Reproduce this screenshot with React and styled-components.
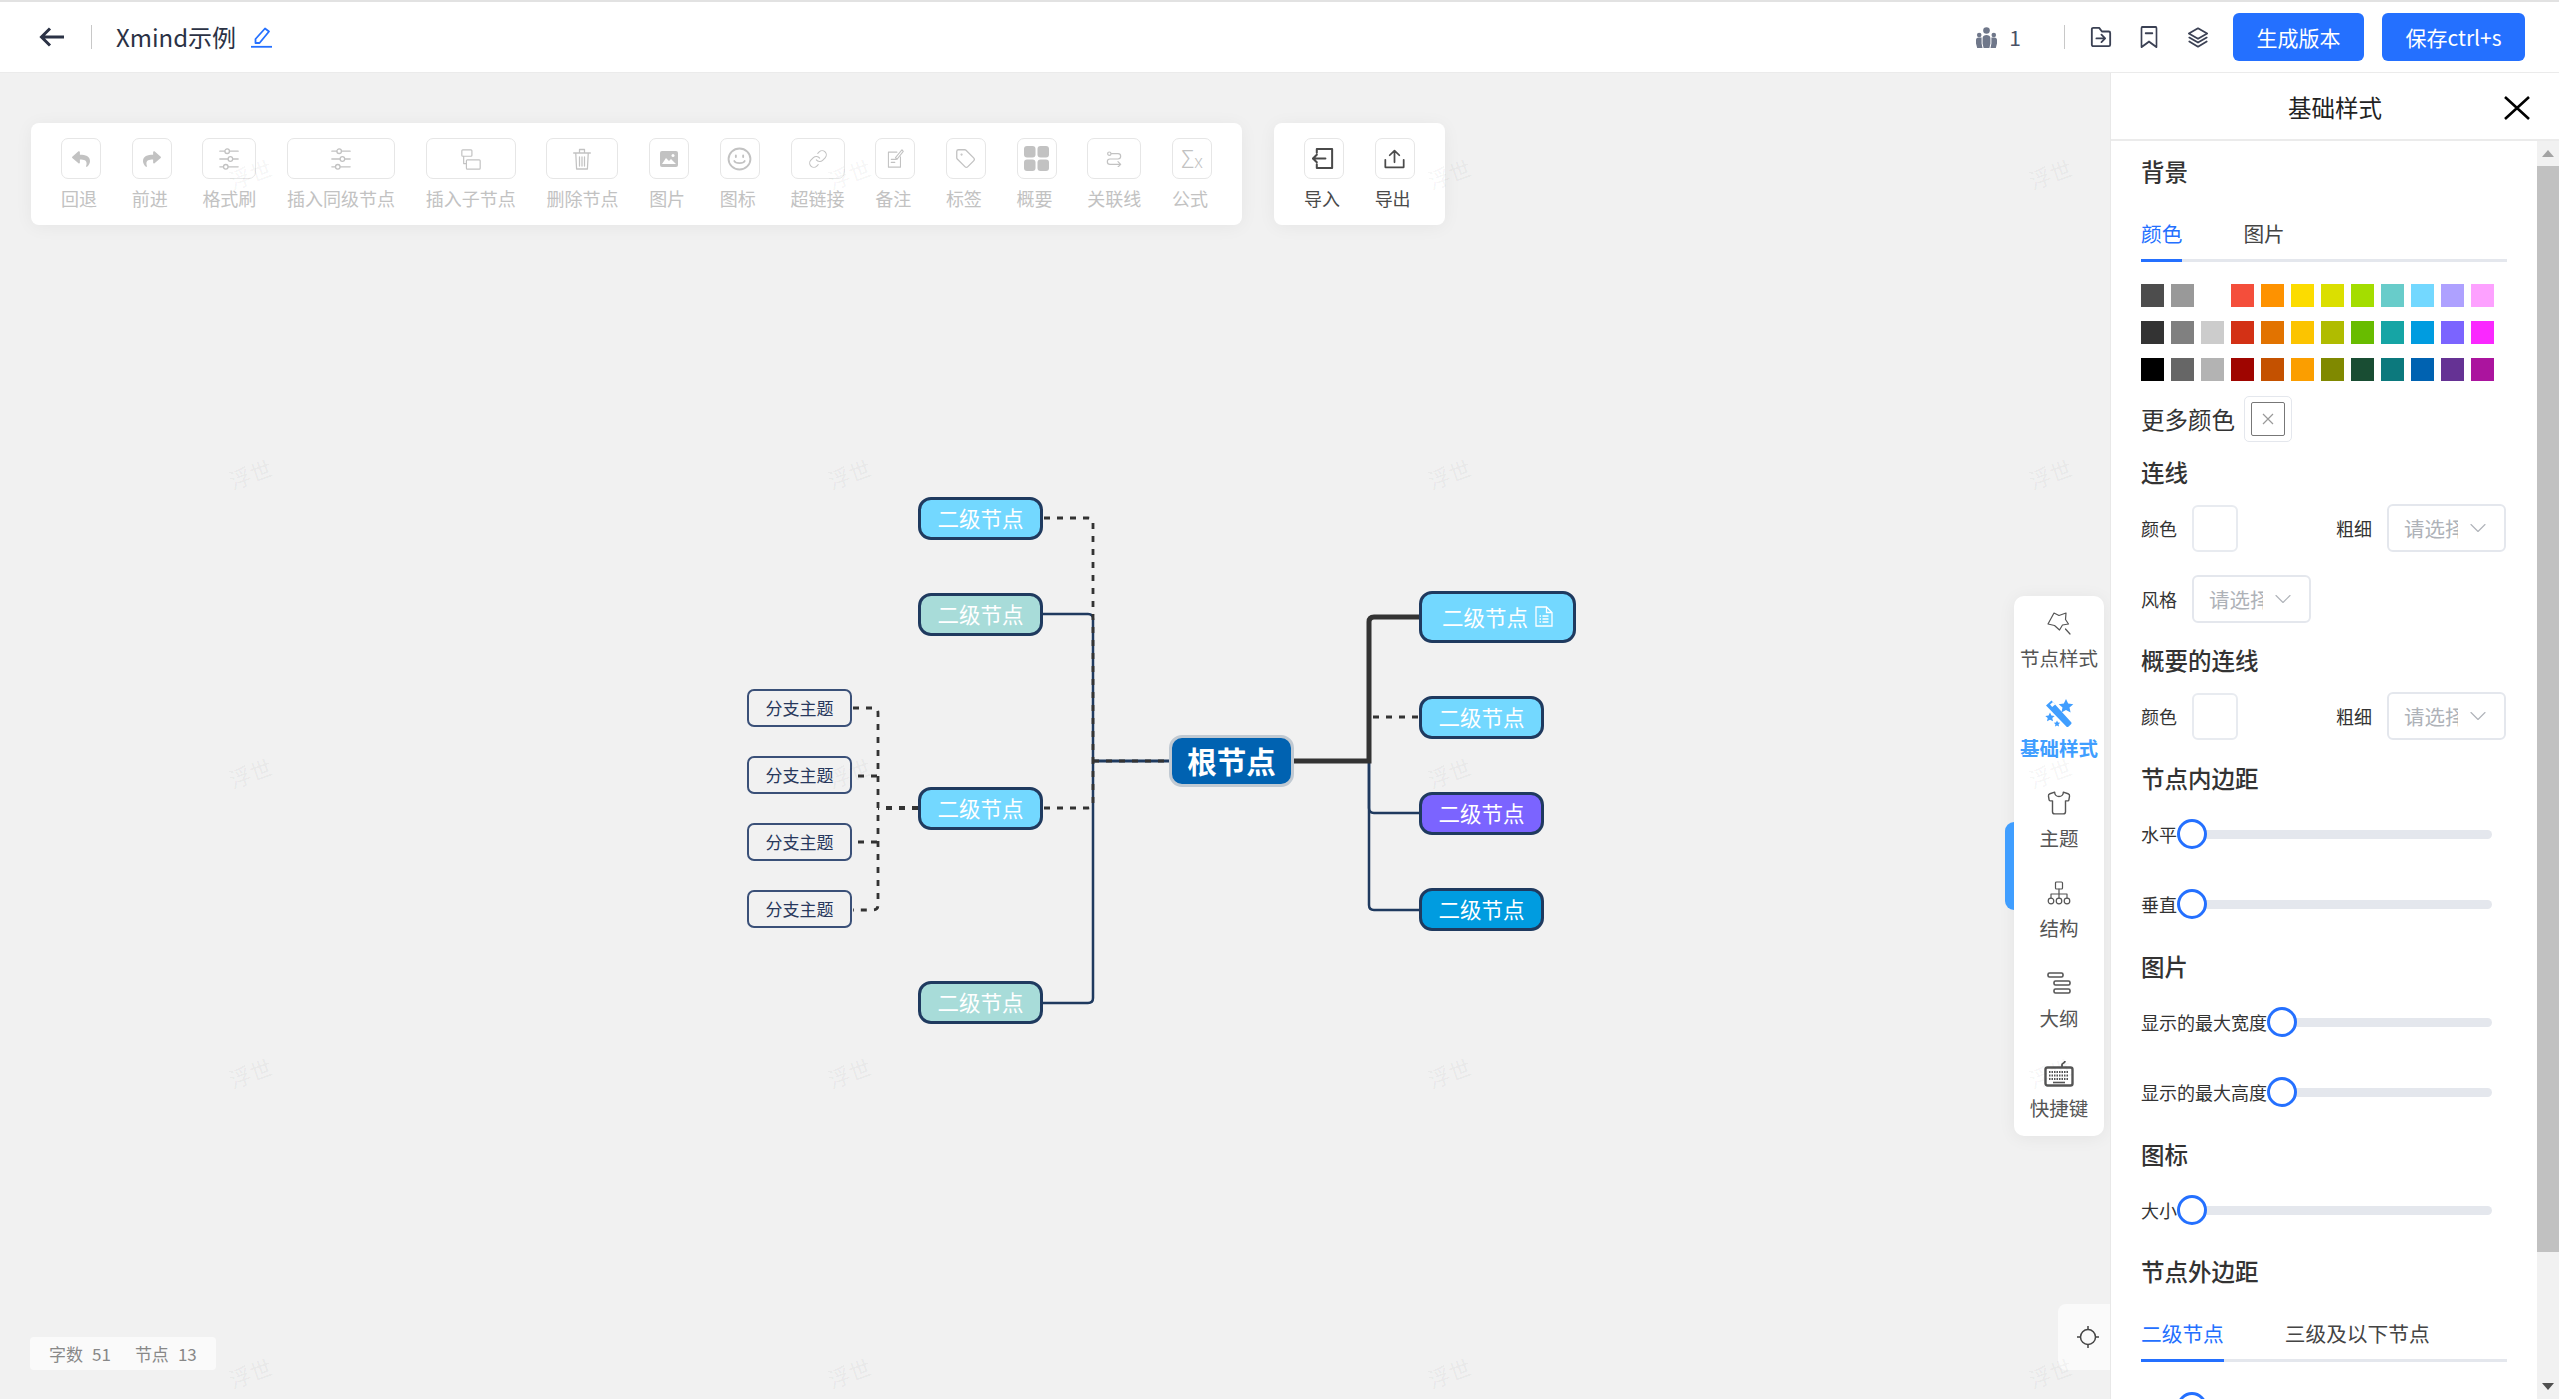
import React from "react";
import styled, { createGlobalStyle } from "styled-components";
import { FaReply, FaShare } from "react-icons/fa";
import { ChevronDown, Link, Shirt, Tag } from "lucide-react";

const BLUE = "#2470ff";
const NAVY = "#1f3a5f";
const DARK = "#333";

const Ico = ({ w = 24, h = 24, sw = 1.6, children }) => (
  <svg width={w} height={h} viewBox="0 0 24 24" fill="none" stroke="currentColor" strokeWidth={sw} strokeLinecap="round" strokeLinejoin="round" preserveAspectRatio="none">
    {children}
  </svg>
);

const SlidersIcon = () => (
  <Ico w={22} h={22} sw={1.4}>
    <path d="M2 3.500h5.500M12.500 3.500H22M2 12h9M16 12h6M2 20.500h4M11 20.500h11" />
    <circle cx="10" cy="3.500" r="2.500" />
    <circle cx="13.500" cy="12" r="2.500" />
    <circle cx="8.500" cy="20.500" r="2.500" />
  </Ico>
);
const ChildIcon = () => (
  <Ico w={22} h={22} sw={1.300}>
    <rect x="2" y="2" width="11" height="7" rx="1" />
    <rect x="7" y="13" width="15" height="10" rx="1" />
    <path d="M4 9v8h3" />
  </Ico>
);
const TrashIcon = () => (
  <Ico w={20} h={24} sw={1.500}>
    <path d="M2 6h20M9 6V2.500h6V6M4.500 6l1 16h13l1-16M9 10v9M12 10v9M15 10v9" />
  </Ico>
);
const ImageIcon = () => (
  <svg width="18" height="16" viewBox="0 0 18 16">
    <rect width="18" height="16" rx="2" fill="currentColor" />
    <path d="M2 13l4-6 3 3 2-2 5 5z" fill="#fff" />
    <circle cx="13" cy="4.500" r="1.500" fill="#fff" />
  </svg>
);
const SmileIcon = () => (
  <Ico w={25} h={24} sw={1.800}>
    <circle cx="12" cy="12" r="10.500" />
    <path d="M7 14c1.200 2.800 8.800 2.800 10 0M8.500 8.500v1.500M15.500 8.500v1.500" />
  </Ico>
);
const NoteIcon = () => (
  <Ico w={17} h={19} sw={1.500}>
    <path d="M14 4H2v19h17V10M6 13h7M6 17h5" />
    <path d="M12 11l9-10 2 2-9 10z" />
  </Ico>
);
const GridIcon = () => (
  <svg width="25" height="25" viewBox="0 0 25 25" fill="currentColor">
    <rect width="11.500" height="11.500" rx="3" />
    <rect x="13.500" width="11.500" height="11.500" rx="3" />
    <rect y="13.500" width="11.500" height="11.500" rx="3" />
    <rect x="13.500" y="13.500" width="11.500" height="11.500" rx="3" />
  </svg>
);
const RelationIcon = () => (
  <Ico w={16} h={16} sw={1.800}>
    <circle cx="5" cy="4" r="2.500" />
    <path d="M8 4h10a3.500 3.500 0 0 1 0 8H6a3.500 3.500 0 0 0 0 8h16M18 16l4 4-4 4" />
  </Ico>
);
const ImportIcon = () => (
  <Ico w={23} h={23} sw={2.100}>
    <path d="M5 6V2h16v20H5v-4M1 12h13M5 8l-4 4 4 4" />
  </Ico>
);
const ExportIcon = () => (
  <Ico w={21} h={20} sw={2}>
    <path d="M12 16V2M6.500 7.500L12 2l5.500 5.500M1.500 13v9h21v-9" />
  </Ico>
);
const StarOutlineIcon = () => (
  <Ico w={24} h={24} sw={1.200}>
    <path d="M7 2l5 2.500L19 2l-.5 6.500 3 4.500-6 1-3 5-5-4.500L1 13l3-5.500z" />
    <path d="M18.500 18l4.500 5" />
  </Ico>
);
const WandIcon = () => (
  <svg width="30" height="29" viewBox="0 0 30 29" fill="currentColor">
    <path d="M2 6.500L7.500 1.500 27 23c.7.800.7 1.600 0 2.300l-2.400 2.200c-.8.700-1.600.7-2.300-.1z" />
    <path d="M6 5.500l3-2.500 2.200 2.500-3 2.500z" fill="#fff" />
    <path d="M22 0l2.200 4.600 5.100.6-3.800 3.400 1.100 5L22 11.100l-4.600 2.500 1.100-5-3.800-3.400 5.100-.6z" />
    <path d="M6 13.500l1.400 3 3.300.4-2.400 2.200.7 3.200L6 20.700l-3 1.600.7-3.200-2.400-2.200 3.300-.4z" />
    <path d="M13 21.500l1 2 2.200.3-1.600 1.500.4 2.200-2-1.100-2 1.100.4-2.200-1.600-1.500 2.200-.3z" />
  </svg>
);
const StructureIcon = () => (
  <Ico w={24} h={24} sw={1.200}>
    <rect x="8.500" y="1" width="7" height="7" rx="1" />
    <path d="M12 8v5M4 17v-4h16v4M12 13v4" />
    <circle cx="4" cy="20" r="2.800" />
    <circle cx="12" cy="20" r="2.800" />
    <circle cx="20" cy="20" r="2.800" />
  </Ico>
);
const OutlineIcon = () => (
  <Ico w={24} h={24} sw={1.600}>
    <rect x="1" y="2" width="15" height="4" rx="1.500" />
    <rect x="7" y="10" width="16" height="4" rx="1.500" />
    <rect x="7" y="18" width="16" height="4" rx="1.500" />
  </Ico>
);
const KeyboardIcon = () => (
  <svg width="30" height="27" viewBox="0 0 30 27" fill="none" stroke="currentColor">
    <rect x="1.500" y="7.500" width="27" height="18" rx="2" strokeWidth="2.400" />
    <path d="M5 12h20M5 15.500h20M5 19h20" strokeWidth="2" strokeDasharray="1.500 1" />
    <path d="M9 22.500h12" strokeWidth="1.600" />
    <path d="M18 7V4.500c0-1.500 3-1 3-3.500" strokeWidth="1.800" />
  </svg>
);
const FolderIcon = () => (
  <Ico w={22} h={22} sw={2}>
    <path d="M2 20.500V3.500C2 2.700 2.700 2 3.500 2H10l3 4h7.500c.8 0 1.500.7 1.500 1.500v13c0 .8-.7 1.500-1.500 1.500h-17C2.700 22 2 21.300 2 20.500z" />
    <path d="M7 13.500h9M12.500 9.500l4 4-4 4" />
  </Ico>
);
const BookmarkIcon = () => (
  <Ico w={18} h={22} sw={2.200}>
    <path d="M2 23V2.500C2 1.700 2.700 1 3.500 1h17c.8 0 1.500.7 1.500 1.500V23l-10-6z" />
    <path d="M7.500 8h9" />
  </Ico>
);
const LayersIcon = () => (
  <Ico w={22} h={21} sw={1.900}>
    <path d="M12 1.500L22 7.500 12 13.500 2 7.500z" />
    <path d="M2.500 12L12 17.800 21.500 12" />
    <path d="M2.500 16.500L12 22.500 21.500 16.500" />
  </Ico>
);
const UsersIcon = () => (
  <svg width="21" height="21" viewBox="0 0 21 21" fill="#6f778a">
    <circle cx="10.500" cy="3.500" r="3.300" />
    <circle cx="3.200" cy="8" r="2.300" />
    <circle cx="17.800" cy="8" r="2.300" />
    <path d="M6.600 11c0-2 1.900-3 3.900-3s3.900 1 3.900 3v5.500l-1 4.500H7.600l-1-4.500z" />
    <path d="M0 13c0-1.500 1-2.500 2.500-2.500h3.100v6L6.500 21H1.200L0 16.500zM15.400 10.500h3.100c1.500 0 2.500 1 2.500 2.500v3.500L19.800 21h-5.300l.9-4.500z" />
  </svg>
);
const PencilIcon = () => (
  <svg width="21" height="21" viewBox="0 0 21 21" fill="none" stroke={BLUE} strokeWidth="1.800" strokeLinejoin="round">
    <path d="M14 1.500l4 3-9.500 11.500H4.500V12z" />
    <path d="M0 19.800h21" />
  </svg>
);
const CloseIcon = () => (
  <svg width="26" height="24" viewBox="0 0 26 24" stroke="#000" strokeWidth="2.600">
    <path d="M1 1l24 22M25 1L1 23" />
  </svg>
);
const BackIcon = () => (
  <svg width="25" height="20" viewBox="0 0 25 20" fill="none" stroke="#2b3245" strokeWidth="3">
    <path d="M25 10H3M11 1.500L2.500 10l8.500 8.500" />
  </svg>
);
const TargetIcon = () => (
  <svg width="22" height="22" viewBox="0 0 22 22" fill="none" stroke="#444" strokeWidth="1.500">
    <circle cx="11" cy="11" r="7.500" />
    <path d="M11 0v4M11 18v4M0 11h4M18 11h4" />
  </svg>
);
const NodeNoteIcon = () => (
  <svg width="18" height="21" viewBox="0 0 18 21" fill="none" stroke="#fff" strokeWidth="1.300">
    <path d="M1 1h10.500L17 6.500V20H1zM11.500 1v5.500H17" />
    <path d="M4.500 10h1.500M7.500 10h6M4.500 13h1.500M7.500 13h6M4.500 16h1.500M7.500 16h6" />
  </svg>
);

const GlobalStyle = createGlobalStyle`
  html, body {
    margin: 0;
    padding: 0;
    overflow: hidden;
  }
  body {
    font-family: "Noto Sans CJK SC", "Noto Sans", sans-serif;
    color: #333;
  }
  * {
    box-sizing: border-box;
  }
`;

const Page = styled.div`
  width: 2559px;
  height: 1399px;
  display: flex;
  flex-direction: column;
  overflow: hidden;
  background: #fff;
`;

const Header = styled.header`
  flex: none;
  height: 73px;
  display: flex;
  align-items: center;
  padding: 0 34px 0 39px;
  background: #fff;
  border-top: 2px solid #e2e2e2;
  border-bottom: 1px solid #ebebeb;
`;

const HeaderDivider = styled.span`
  width: 1px;
  height: 24px;
  background: #c8c8c8;
  margin-left: ${(p) => p.$gap}px;
`;

const BackButton = styled.span`
  display: flex;
`;

const Title = styled.span`
  margin-left: 24px;
  font-size: 24px;
  line-height: 36px;
  color: #2b3245;
`;

const EditButton = styled.span`
  display: flex;
  margin-left: 15px;
`;

const UserCount = styled.span`
  margin-left: auto;
  display: flex;
  align-items: center;
  gap: 12px;
  font-size: 21px;
  color: #4a5166;
`;

const HeaderIcon = styled.span`
  display: flex;
  color: #3b4154;
  margin-left: ${(p) => p.$gap}px;
`;

const PrimaryButton = styled.button`
  width: ${(p) => p.$w}px;
  height: 48px;
  margin-left: ${(p) => p.$gap}px;
  border: 0;
  border-radius: 6px;
  background: ${BLUE};
  color: #fff;
  font: 21px "Noto Sans CJK SC", sans-serif;
  padding: 0;
`;

const Body = styled.main`
  flex: 1;
  display: flex;
  min-height: 0;
`;

const Canvas = styled.section`
  flex: 1;
  position: relative;
  overflow: hidden;
  background: #f1f1f1;
`;

const MapLayer = styled.div`
  position: absolute;
  left: 0;
  top: -73px;
  width: 2110px;
  height: 1399px;
`;

const MapLines = styled.svg`
  position: absolute;
  left: 0;
  top: 0;
`;

const MapNode = styled.div`
  position: absolute;
  left: ${(p) => p.$x}px;
  top: ${(p) => p.$y}px;
  width: ${(p) => p.$w}px;
  height: ${(p) => p.$h}px;
  display: flex;
  align-items: center;
  justify-content: center;
  gap: 7px;
  padding-bottom: 2px;
  background: ${(p) => p.$bg};
  border: 3px solid ${NAVY};
  border-radius: 13px;
  color: #fff;
  font-size: 21.500px;
  white-space: nowrap;
`;

const RootNode = styled(MapNode)`
  border-color: #c0c9d2;
  font-size: 29.500px;
  font-weight: 700;
`;

const SubNode = styled(MapNode)`
  background: transparent;
  border-width: 2px;
  border-color: #3a5078;
  border-radius: 7px;
  color: #28385c;
  font-size: 17px;
`;

const FloatRow = styled.div`
  position: absolute;
  left: 31px;
  top: 50px;
  display: flex;
  gap: 32px;
`;

const Toolbar = styled.div`
  display: flex;
  gap: 30.700px;
  padding: 15px 30px;
  background: #fff;
  border-radius: 8px;
  box-shadow: 0 2px 18px rgba(0, 0, 0, 0.05);
`;

const ToolItem = styled.div`
  display: flex;
  flex-direction: column;
  color: ${(p) => (p.$on ? "#4a4a4a" : "#c2c2c2")};
`;

const ToolBox = styled.div`
  height: 41px;
  min-width: 40px;
  display: flex;
  align-items: center;
  justify-content: center;
  border: 1px solid #e6e6e6;
  border-radius: 7px;
  background: #fff;
`;

const ToolLabel = styled.span`
  margin-top: 7px;
  font-size: 18px;
  line-height: 24px;
  white-space: nowrap;
`;

const FormulaGlyph = styled.span`
  font: 300 25px/1 "Noto Sans", sans-serif;
  transform: scaleX(0.9);
  small {
    font-size: 19px;
  }
`;

const SideDock = styled.nav`
  position: absolute;
  right: 6px;
  top: 523px;
  width: 90px;
  display: flex;
  flex-direction: column;
  gap: 26px;
  padding: 13px 0;
  background: #fff;
  border-radius: 10px;
  box-shadow: 0 2px 18px rgba(0, 0, 0, 0.06);
`;

const DockTab = styled.span`
  position: absolute;
  left: -9px;
  top: 226px;
  width: 9px;
  height: 88px;
  background: #409eff;
  border-radius: 10px 0 0 10px;
`;

const DockItem = styled.div`
  height: 64px;
  display: flex;
  flex-direction: column;
  align-items: center;
  color: ${(p) => (p.$on ? "#409eff" : "#555")};
`;

const DockIcon = styled.span`
  height: 28px;
  display: flex;
  align-items: center;
  justify-content: center;
`;

const DockLabel = styled.span`
  margin-top: 8px;
  font-size: 19.500px;
  line-height: 26px;
  white-space: nowrap;
  font-weight: ${(p) => (p.$on ? 700 : 400)};
`;

const LocateButton = styled.div`
  position: absolute;
  right: 0;
  top: 1231px;
  width: 52px;
  height: 66px;
  display: flex;
  align-items: center;
  justify-content: center;
  padding-left: 7px;
  background: #fafafa;
  border-radius: 8px 0 0 8px;
`;

const StatusBar = styled.div`
  position: absolute;
  left: 30px;
  bottom: 29px;
  height: 33px;
  display: flex;
  align-items: center;
  padding: 0 19px;
  gap: 9px;
  background: #fafafa;
  border-radius: 4px;
  color: #888;
  font-size: 17px;
`;

const StatusGap = styled.span`
  width: 6px;
`;

const Watermark = styled.span`
  position: absolute;
  left: ${(p) => p.$x}px;
  top: ${(p) => p.$y - 73}px;
  transform: translate(-50%, -50%) rotate(-20deg);
  font-size: 22px;
  color: rgba(0, 0, 0, 0.05);
  pointer-events: none;
  white-space: nowrap;
`;

const Panel = styled.aside`
  flex: none;
  width: 449px;
  display: flex;
  flex-direction: column;
  background: #fff;
  border-left: 1px solid #e8e8e8;
`;

const PanelHeader = styled.div`
  flex: none;
  height: 68px;
  position: relative;
  display: flex;
  align-items: center;
  justify-content: center;
  padding-top: 2px;
  border-bottom: 2px solid #ebebeb;
  font-size: 23.500px;
  color: #222;
`;

const PanelClose = styled.span`
  position: absolute;
  right: 29px;
  top: 23px;
  display: flex;
`;

const PanelScroll = styled.div`
  flex: 1;
  min-height: 0;
  display: flex;
`;

const PanelBody = styled.div`
  flex: 1;
  min-width: 0;
  overflow: hidden;
  padding: 13px 30px 0 30px;
`;

const Scrollbar = styled.div`
  flex: none;
  width: 22px;
  display: flex;
  flex-direction: column;
  background: #f1f1f1;
`;

const ScrollArrow = styled.div`
  height: 25px;
  display: flex;
  align-items: center;
  justify-content: center;
  &::before {
    content: "";
    border-left: 6px solid transparent;
    border-right: 6px solid transparent;
    ${(p) => (p.$down ? "border-top: 7px solid #505050;" : "border-bottom: 7px solid #a3a3a3;")}
  }
`;

const ScrollThumb = styled.div`
  height: 1086px;
  background: #c1c1c1;
`;

const ScrollFill = styled.div`
  flex: 1;
`;

const Heading = styled.h3`
  margin: ${(p) => p.$mt || 0}px 0 0;
  font-size: 23.500px;
  line-height: 34px;
  font-weight: 500;
  color: #333;
`;

const Tabs = styled.div`
  margin-top: 27px;
  display: flex;
  gap: 61px;
  border-bottom: 3px solid #e4e7ed;
`;

const Tab = styled.span`
  line-height: 36px;
  font-size: 20.700px;
  margin-bottom: -3px;
  height: 47px;
  padding-bottom: 8px;
  color: ${(p) => (p.$on ? BLUE : "#444")};
  border-bottom: 3px solid ${(p) => (p.$on ? BLUE : "transparent")};
`;

const Swatches = styled.div`
  margin-top: 22px;
  display: grid;
  grid-template-columns: repeat(12, 23px);
  column-gap: 7px;
  row-gap: 14px;
`;

const Swatch = styled.span`
  height: 23px;
  background: ${(p) => p.$c};
`;

const MoreColors = styled.div`
  margin-top: 15px;
  display: flex;
  align-items: center;
  gap: 9px;
  font-size: 23.500px;
  color: #333;
`;

const PickerOuter = styled.span`
  width: 48px;
  height: 46px;
  display: flex;
  align-items: center;
  justify-content: center;
  border: 1px solid #e4e7ed;
  border-radius: 5px;
`;

const PickerInner = styled.span`
  width: 34px;
  height: 34px;
  display: flex;
  align-items: center;
  justify-content: center;
  border: 1px solid #777;
  border-radius: 2px;
  color: #999;
`;

const FormRow = styled.div`
  margin-top: ${(p) => p.$mt}px;
  width: 365px;
  display: flex;
  align-items: center;
  justify-content: space-between;
`;

const Field = styled.div`
  display: flex;
  align-items: center;
  gap: 15px;
`;

const FieldLabel = styled.span`
  font-size: 18px;
  line-height: 26px;
  color: #333;
  white-space: nowrap;
`;

const ColorBox = styled.span`
  width: 46px;
  height: 47px;
  border: 2px solid #e8ebf0;
  border-radius: 6px;
  background: #fff;
`;

const Select = styled.div`
  width: 119px;
  height: 48px;
  display: flex;
  align-items: center;
  padding-left: 15px;
  border: 2px solid #e4e7ed;
  border-radius: 6px;
  color: #aeb2b8;
`;

const SelectText = styled.span`
  width: 54px;
  overflow: hidden;
  white-space: nowrap;
  font-size: 20.500px;
`;

const SelectArrow = styled.span`
  display: flex;
  margin-left: 6px;
  color: #b0b4ba;
`;

const SliderRow = styled.div`
  margin-top: ${(p) => p.$mt}px;
  width: 351px;
  height: 30px;
  display: flex;
  align-items: center;
`;

const SliderTrack = styled.div`
  flex: 1;
  height: 9px;
  position: relative;
  background: #e4e7ed;
  border-radius: 5px;
`;

const SliderThumb = styled.span`
  position: absolute;
  left: 0;
  top: -11px;
  width: 30px;
  height: 30px;
  border: 3px solid ${BLUE};
  border-radius: 50%;
  background: #fff;
`;

const palette = [
  ["#4d4d4d", "#999999", "#ffffff", "#f44e3b", "#fe9200", "#fcdc00", "#dbdf00", "#a4dd00", "#68ccca", "#73d8ff", "#aea1ff", "#fda1ff"],
  ["#333333", "#808080", "#cccccc", "#d33115", "#e27300", "#fcc400", "#b0bc00", "#68bc00", "#16a5a5", "#009ce0", "#7b64ff", "#fa28ff"],
  ["#000000", "#666666", "#b3b3b3", "#9f0500", "#c45100", "#fb9e00", "#808900", "#194d33", "#0c797d", "#0062b1", "#653294", "#ab149e"],
].flat();

const tools = [
  ["回退", <FaReply size={18} />],
  ["前进", <FaShare size={18} />],
  ["格式刷", <SlidersIcon />],
  ["插入同级节点", <SlidersIcon />],
  ["插入子节点", <ChildIcon />],
  ["删除节点", <TrashIcon />],
  ["图片", <ImageIcon />],
  ["图标", <SmileIcon />],
  ["超链接", <Link size={20} strokeWidth={1.300} />],
  ["备注", <NoteIcon />],
  ["标签", <Tag size={21} strokeWidth={1.500} />],
  ["概要", <GridIcon />],
  ["关联线", <RelationIcon />],
  ["公式", <FormulaGlyph>Σ<small>x</small></FormulaGlyph>],
];

const dock = [
  ["节点样式", <StarOutlineIcon />],
  ["基础样式", <WandIcon />, true],
  ["主题", <Shirt size={26} strokeWidth={1.300} />],
  ["结构", <StructureIcon />],
  ["大纲", <OutlineIcon />],
  ["快捷键", <KeyboardIcon />],
];

const secondNodes = [
  { x: 918, y: 497, bg: "#73d8ff" },
  { x: 918, y: 593, bg: "#a8dcd9" },
  { x: 918, y: 787, bg: "#73d8ff" },
  { x: 918, y: 981, bg: "#a8dcd9" },
  { x: 1419, y: 696, bg: "#73d8ff" },
  { x: 1419, y: 792, bg: "#7b64ff" },
  { x: 1419, y: 888, bg: "#009ce0" },
];

const subY = [689, 756, 823, 890];
const markX = [250, 849, 1449, 2050];
const markY = [173, 473, 772, 1072, 1372];

const ColorField = ({ label }) => (
  <Field>
    <FieldLabel>{label}</FieldLabel>
    <ColorBox />
  </Field>
);

const SelectField = ({ label }) => (
  <Field>
    <FieldLabel>{label}</FieldLabel>
    <Select>
      <SelectText>请选择</SelectText>
      <SelectArrow>
        <ChevronDown size={28} strokeWidth={1} />
      </SelectArrow>
    </Select>
  </Field>
);

const Slider = ({ label, mt }) => (
  <SliderRow $mt={mt}>
    <FieldLabel>{label}</FieldLabel>
    <SliderTrack>
      <SliderThumb />
    </SliderTrack>
  </SliderRow>
);

const App = () => {
  return (
    <Page>
      <GlobalStyle />
      <Header>
        <BackButton>
          <BackIcon />
        </BackButton>
        <HeaderDivider $gap={27} />
        <Title>Xmind示例</Title>
        <EditButton>
          <PencilIcon />
        </EditButton>
        <UserCount>
          <UsersIcon />1
        </UserCount>
        <HeaderDivider $gap={43} />
        <HeaderIcon $gap={25}>
          <FolderIcon />
        </HeaderIcon>
        <HeaderIcon $gap={28}>
          <BookmarkIcon />
        </HeaderIcon>
        <HeaderIcon $gap={29}>
          <LayersIcon />
        </HeaderIcon>
        <PrimaryButton $w={131} $gap={24}>生成版本</PrimaryButton>
        <PrimaryButton $w={143} $gap={18}>保存ctrl+s</PrimaryButton>
      </Header>
      <Body>
        <Canvas>
          <MapLayer>
            <MapLines width="2110" height="1399" viewBox="0 0 2110 1399" fill="none">
              <g stroke={NAVY} strokeWidth="2.500">
                <path d="M1043 614H1088Q1093 614 1093 619V761" />
                <path d="M1043 1003H1088Q1093 1003 1093 998V761" />
                <path d="M1093 761H1169" strokeWidth="3" />
                <path d="M1369 761V808Q1369 813 1374 813H1419" />
                <path d="M1369 761V905Q1369 910 1374 910H1419" />
              </g>
              <g stroke={DARK} strokeWidth="2.800" strokeDasharray="6 7">
                <path d="M1044 518H1088Q1093 518 1093 523V761" />
                <path d="M1044 808H1088Q1093 808 1093 803V761" />
                <path d="M1093 761H1169" />
                <path d="M1373 717H1419" />
                <path d="M918 808H878" strokeWidth="4" />
                <path d="M853 708H873Q878 708 878 713V905Q878 910 873 910H853" />
                <path d="M858 776H878" />
                <path d="M858 842H878" />
              </g>
              <path d="M1293 761H1369V622Q1369 617 1374 617H1419" stroke={DARK} strokeWidth="5" />
            </MapLines>
            <RootNode $x={1169} $y={735} $w={125} $h={52} $bg="#0062b1">根节点</RootNode>
            <MapNode $x={1419} $y={591} $w={157} $h={52} $bg="#73d8ff">
              二级节点
              <NodeNoteIcon />
            </MapNode>
            {secondNodes.map((n) => (
              <MapNode key={`${n.x}-${n.y}`} $x={n.x} $y={n.y} $w={125} $h={43} $bg={n.bg}>
                二级节点
              </MapNode>
            ))}
            {subY.map((y) => (
              <SubNode key={y} $x={747} $y={y} $w={105} $h={38}>
                分支主题
              </SubNode>
            ))}
          </MapLayer>
          <FloatRow>
            <Toolbar>
              {tools.map(([label, icon]) => (
                <ToolItem key={label}>
                  <ToolBox>{icon}</ToolBox>
                  <ToolLabel>{label}</ToolLabel>
                </ToolItem>
              ))}
            </Toolbar>
            <Toolbar>
              <ToolItem $on>
                <ToolBox><ImportIcon /></ToolBox>
                <ToolLabel>导入</ToolLabel>
              </ToolItem>
              <ToolItem $on>
                <ToolBox><ExportIcon /></ToolBox>
                <ToolLabel>导出</ToolLabel>
              </ToolItem>
            </Toolbar>
          </FloatRow>
          <SideDock>
            <DockTab />
            {dock.map(([label, icon, on]) => (
              <DockItem key={label} $on={on}>
                <DockIcon>{icon}</DockIcon>
                <DockLabel $on={on}>{label}</DockLabel>
              </DockItem>
            ))}
          </SideDock>
          <LocateButton>
            <TargetIcon />
          </LocateButton>
          <StatusBar>
            <span>字数</span>
            <span>51</span>
            <StatusGap />
            <span>节点</span>
            <span>13</span>
          </StatusBar>
          {markY.flatMap((y) =>
            markX.map((x) => (
              <Watermark key={`${x}-${y}`} $x={x} $y={y}>浮世</Watermark>
            ))
          )}
        </Canvas>
        <Panel>
          <PanelHeader>
            基础样式
            <PanelClose>
              <CloseIcon />
            </PanelClose>
          </PanelHeader>
          <PanelScroll>
            <PanelBody>
              <Heading>背景</Heading>
              <Tabs>
                <Tab $on>颜色</Tab>
                <Tab>图片</Tab>
              </Tabs>
              <Swatches>
                {palette.map((c, i) => (
                  <Swatch key={i} $c={c} />
                ))}
              </Swatches>
              <MoreColors>
                更多颜色
                <PickerOuter>
                  <PickerInner>
                    <svg width="12" height="12" viewBox="0 0 12 12" stroke="currentColor" strokeWidth="1.200">
                      <path d="M1 1l10 10M11 1L1 11" />
                    </svg>
                  </PickerInner>
                </PickerOuter>
              </MoreColors>
              <Heading $mt={13}>连线</Heading>
              <FormRow $mt={15}>
                <ColorField label="颜色" />
                <SelectField label="粗细" />
              </FormRow>
              <FormRow $mt={23}>
                <SelectField label="风格" />
              </FormRow>
              <Heading $mt={20}>概要的连线</Heading>
              <FormRow $mt={15}>
                <ColorField label="颜色" />
                <SelectField label="粗细" />
              </FormRow>
              <Heading $mt={21}>节点内边距</Heading>
              <Slider label="水平" mt={24} />
              <Slider label="垂直" mt={40} />
              <Heading $mt={30}>图片</Heading>
              <Slider label="显示的最大宽度" mt={24} />
              <Slider label="显示的最大高度" mt={40} />
              <Heading $mt={30}>图标</Heading>
              <Slider label="大小" mt={24} />
              <Heading $mt={29}>节点外边距</Heading>
              <Tabs>
                <Tab $on>二级节点</Tab>
                <Tab>三级及以下节点</Tab>
              </Tabs>
              <Slider label="水平" mt={30} />
            </PanelBody>
            <Scrollbar>
              <ScrollArrow />
              <ScrollThumb />
              <ScrollFill />
              <ScrollArrow $down />
            </Scrollbar>
          </PanelScroll>
        </Panel>
      </Body>
    </Page>
  );
};

export default App;
